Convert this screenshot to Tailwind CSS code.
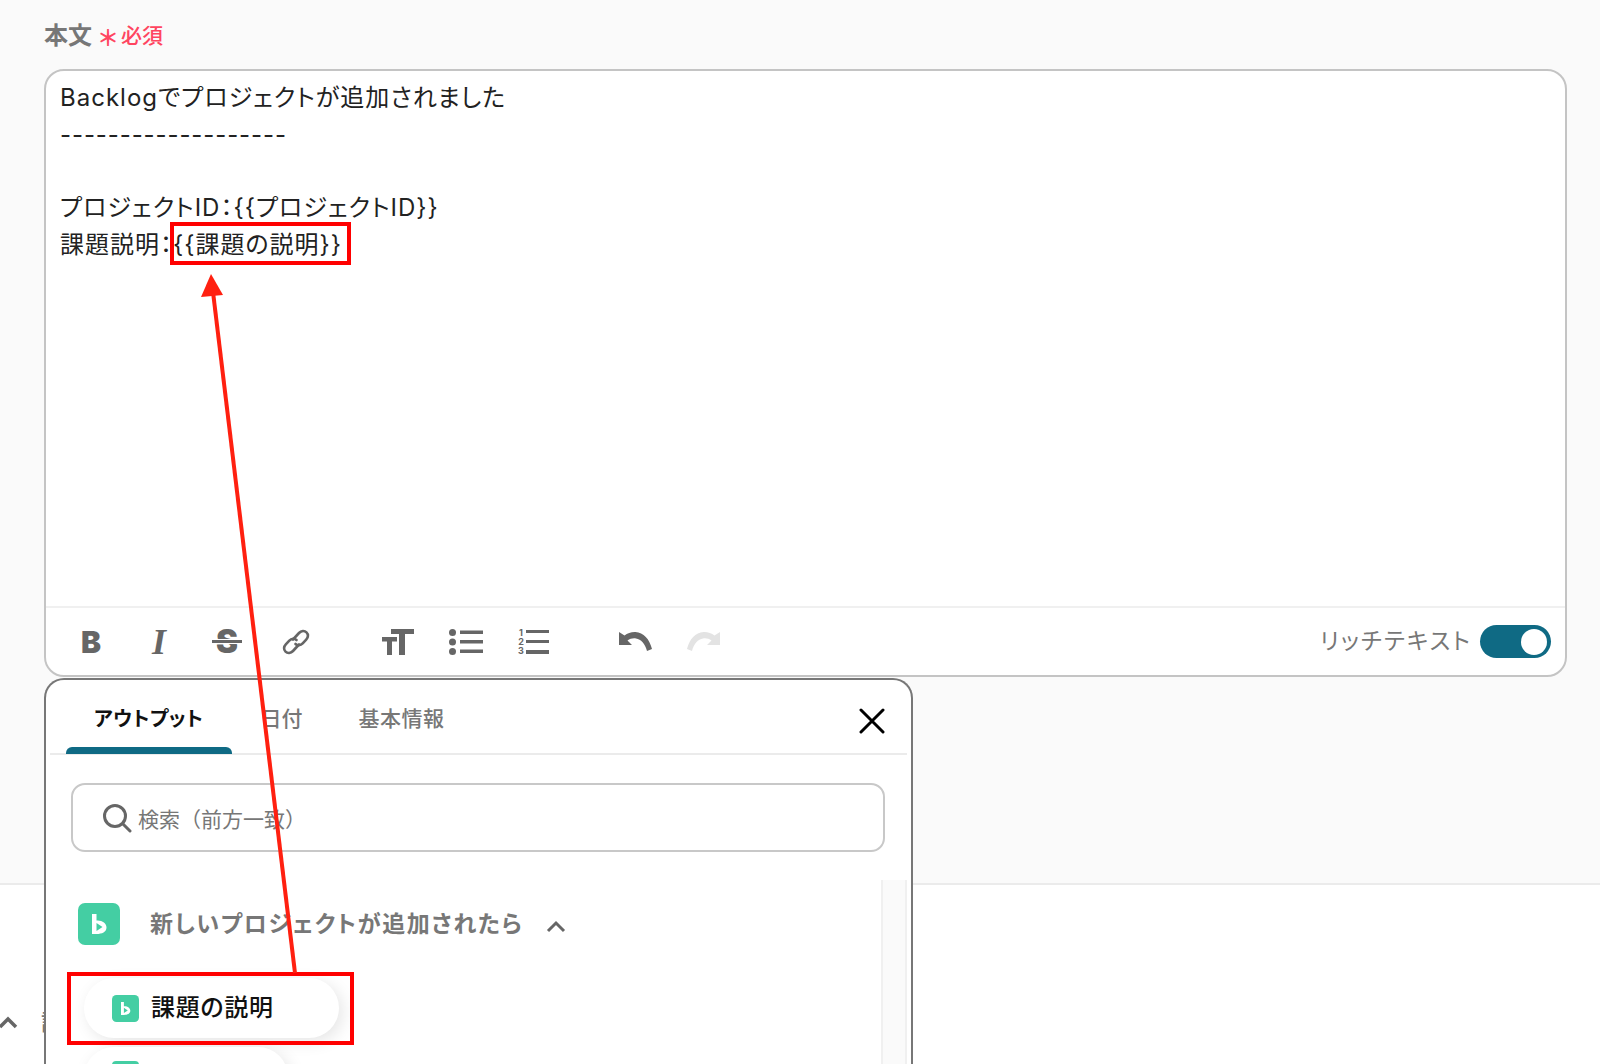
<!DOCTYPE html>
<html lang="ja">
<head>
    <meta charset="UTF-8">
    <title>本文</title>
    <script src="https://cdn.jsdelivr.net/npm/@tailwindcss/browser@4"></script>
</head>
<body class="bg-white">
<div class="relative w-[1600px] h-[1064px] overflow-hidden bg-white font-['Inter','Noto_Sans_CJK_JP',sans-serif] [font-feature-settings:'palt']">

    <!-- Form area -->
    <section class="h-[885px] bg-[#fafafa] border-b-2 border-[#ebebeb] pl-[44px] pr-[33px] pt-[20px]">
        <div class="flex items-center h-[32px]">
            <span class="text-[24px] leading-[32px] font-semibold text-[#777]">本文</span>
            <span class="ml-[7px] text-[#ff4560] text-[22px] leading-[32px] mt-[4px] font-bold">＊</span>
            <span class="ml-[4px] text-[#ff4560] text-[21px] leading-[32px] font-medium">必須</span>
        </div>

        <!-- Editor -->
        <div class="mt-[17px] h-[608px] bg-white border-2 border-[#c4c4c4] rounded-[20px] flex flex-col">
            <div class="flex-1 px-[14px] pt-[9px] text-[24px] leading-[36.7px] text-[#222] tracking-[1px]">
                <p>Backlogでプロジェクトが追加されました</p>
                <p class="tracking-[0.9px]">-------------------</p>
                <p>&nbsp;</p>
                <p>プロジェクトID：{{プロジェクトID}}</p>
                <p>課題説明：{{課題の説明}}</p>
            </div>
            <!-- Toolbar -->
            <div class="h-[69px] border-t-2 border-[#f0f0f0] flex items-center pl-[32px] pr-[14px] text-[#666]">
                <span class="w-[26px] text-center text-[30px] leading-none font-black">B</span>
                <span class="ml-[42px] w-[26px] text-center text-[36px] leading-none font-bold italic font-['Liberation_Serif',serif]">I</span>
                <span class="relative ml-[42px] w-[26px] text-center text-[33px] leading-none font-black">S<span class="absolute left-[-2px] right-[-2px] top-[15px] h-[3px] bg-[#666] ring-1 ring-white"></span></span>
                <svg class="ml-[41px]" width="30" height="32" viewBox="0 0 30 32" fill="none" stroke="#666" stroke-width="2.6" stroke-linecap="round"><path d="M12 13.5l6-6.5c2.200-2.300 5.500-2.500 7.500-.6s1.900 5-.3 7.300l-3.500 3.700c-2.200 2.300-5.300 2.500-7.200.6"/><path d="M18 18.500l-6 6.500c-2.200 2.300-5.500 2.500-7.500.6s-1.900-5 .3-7.300l3.500-3.700c2.200-2.300 5.300-2.500 7.200-.6"/></svg>
                <svg class="ml-[71px]" width="32" height="26" viewBox="0 0 32 26" fill="#666"><rect x="9" y="0" width="23" height="5"/><rect x="17" y="0" width="6" height="26"/><rect x="0" y="8" width="15" height="4.500"/><rect x="5" y="8" width="5" height="18"/></svg>
                <svg class="ml-[35px]" width="34" height="26" viewBox="0 0 34 26" fill="#666"><circle cx="3.500" cy="3.500" r="3.500"/><circle cx="3.500" cy="13" r="3.500"/><circle cx="3.500" cy="22.500" r="3.500"/><rect x="11" y="1.500" width="23" height="3.500"/><rect x="11" y="11" width="23" height="3.500"/><rect x="11" y="20.500" width="23" height="3.500"/></svg>
                <div class="ml-[33px] w-[33px] h-[28px] flex">
                    <div class="w-[10px] flex flex-col text-[9px] leading-[9.300px] font-bold text-center"><span>1</span><span>2</span><span>3</span></div>
                    <div class="flex-1 flex flex-col justify-between py-[2px]"><div class="h-[3.500px] bg-[#666]"></div><div class="h-[3.500px] bg-[#666]"></div><div class="h-[3.500px] bg-[#666]"></div></div>
                </div>
                <svg class="ml-[70px]" width="34" height="24" viewBox="0 0 34 24" fill="#666"><path d="M0 2v13h13L8.500 10.500C11 8.700 14 8 17 8.500c5 .8 9 5 11 12.500l5-2C30.500 9 24.500 2.500 16.500 2 12.500 1.800 8.500 3 5.500 5.500z"/></svg>
                <svg class="ml-[33px]" width="34" height="24" viewBox="0 0 34 24" fill="#e3e3e3"><path d="M34 2v13H21l4.500-4.500C23 8.700 20 8 17 8.500c-5 .8-9 5-11 12.500l-5-2C3.500 9 9.500 2.500 17.500 2c4-.2 8 1 11 3.500z"/></svg>
                <span class="ml-auto text-[23px] text-[#777] tracking-[2px]">リッチテキスト</span>
                <div class="ml-[8px] w-[71px] h-[33px] rounded-full bg-[#0f6a84] flex items-center justify-end pr-[4px]">
                    <div class="w-[26px] h-[26px] rounded-full bg-white"></div>
                </div>
            </div>
        </div>
    </section>

    <!-- Collapsed row behind the panel -->
    <div class="flex items-center h-[30px] mt-[122px]">
        <svg class="ml-[-2px]" width="20" height="14" viewBox="0 0 20 14" fill="none" stroke="#666" stroke-width="3.500"><path d="M2 12l8-8 8 8"/></svg>
        <span class="ml-[23px] text-[22px] font-medium text-[#777]">詳細</span>
    </div>

    <!-- Output picker panel -->
    <div class="absolute left-[44px] top-[678px] w-[869px] h-[400px] bg-white border-2 border-b-0 border-[#777] rounded-t-[20px] px-[4px]">
        <div class="relative h-[75px] border-b-2 border-[#ebebeb] flex items-start pt-[24px] text-[21px] leading-[30px] font-medium text-[#777]">
            <span class="ml-[44px] text-[20px] text-[#111] font-semibold tracking-[0.5px]">アウトプット</span>
            <span class="ml-[57px]">日付</span>
            <span class="ml-[56px] tracking-[0.5px]">基本情報</span>
            <div class="absolute left-[16px] bottom-[-1px] w-[166px] h-[7px] rounded-t-[6px] bg-[#0f6a84]"></div>
            <svg class="absolute right-[22px] top-[28px]" width="26" height="26" viewBox="0 0 26 26" fill="none" stroke="#000" stroke-width="3" stroke-linecap="round"><path d="M2 2l22 22M24 2L2 24"/></svg>
        </div>
        <!-- Search -->
        <div class="ml-[21px] mr-[22px] mt-[28px] h-[69px] border-2 border-[#c8c8c8] rounded-[14px] flex items-center pl-[29px]">
            <svg width="30" height="30" viewBox="0 0 30 30" fill="none" stroke="#666" stroke-width="3" stroke-linecap="round"><circle cx="13" cy="13" r="10.500"/><path d="M21 21l7 7"/></svg>
            <span class="ml-[6px] mt-[4px] text-[21px] text-[#777] [font-feature-settings:normal]">検索（前方一致）</span>
        </div>
        <!-- List + scrollbar track -->
        <div class="flex mt-[28px] h-[210px]">
            <div class="flex-1 pl-[28px] pt-[23px]">
                <div class="flex items-center h-[42px]">
                    <svg width="42" height="42" viewBox="0 0 42 42"><rect width="42" height="42" rx="7" fill="#44cea3"/><path fill="#fff" fill-rule="evenodd" d="M14 11h4.500v6.500C24 17 28.500 20 28.500 24.500S24 31 18.500 31H14zM18.500 20v8l6-4z"/></svg>
                    <span class="ml-[30px] text-[23px] font-semibold text-[#777] tracking-[1.6px]">新しいプロジェクトが追加されたら</span>
                    <svg class="ml-[23px] mt-[4px]" width="20" height="14" viewBox="0 0 20 14" fill="none" stroke="#666" stroke-width="3"><path d="M2 12l8-8 8 8"/></svg>
                </div>
                <div class="ml-[6px] mt-[33px] w-[255px] h-[60px] rounded-full bg-white shadow-[4px_4px_16px_rgba(0,0,0,0.10)] flex items-center pl-[28px]">
                    <svg width="27" height="27" viewBox="0 0 42 42"><rect width="42" height="42" rx="7" fill="#44cea3"/><path fill="#fff" fill-rule="evenodd" d="M14 11h4.500v6.500C24 17 28.500 20 28.500 24.500S24 31 18.500 31H14zM18.500 20v8l6-4z"/></svg>
                    <span class="ml-[12px] text-[24px] font-medium text-[#111] tracking-[0.7px]">課題の説明</span>
                </div>
                <div class="ml-[6px] mt-[9px] w-[204px] h-[60px] rounded-full bg-white shadow-[4px_4px_16px_rgba(0,0,0,0.10)] flex items-start pl-[28px]">
                    <div class="mt-[14px] w-[27px] h-[27px] rounded-[4px] bg-[#44cea3]"></div>
                </div>
            </div>
            <div class="w-[26px] bg-[#fafafa] border-x-2 border-[#f0f0f0]"></div>
        </div>
    </div>

    <!-- Annotations -->
    <div class="absolute left-[170px] top-[222px] w-[181px] h-[43px] border-[4px] border-[#f00]"></div>
    <div class="absolute left-[67px] top-[972px] w-[287px] h-[73px] border-[4px] border-[#f00]"></div>
    <svg class="absolute left-0 top-0" width="1600" height="1064" viewBox="0 0 1600 1064" fill="none">
        <path d="M295 973L213 292" stroke="#ff2010" stroke-width="4"/>
        <polygon points="211,274 201,297 223,295" fill="#ff2010"/>
    </svg>
</div>
</body>
</html>
